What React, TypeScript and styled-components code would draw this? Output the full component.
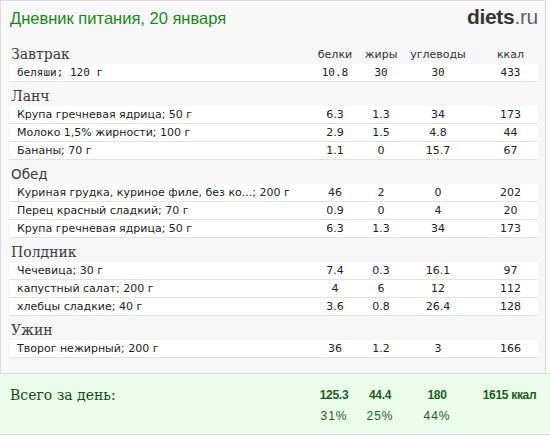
import React from 'react';
import styled, { createGlobalStyle } from 'styled-components';

const GlobalStyle = createGlobalStyle`
  html, body {
    margin: 0;
    padding: 0;
    background: #ffffff;
  }
  body {
    font-family: "DejaVu Sans", Verdana, sans-serif;
  }
`;

type Food = {
  name: string;
  protein: string;
  fat: string;
  carbs: string;
  kcal: string;
  mono?: boolean;
};

type Meal = {
  title: string;
  sans?: boolean;
  foods: Food[];
};

const meals: Meal[] = [
  {
    title: 'Завтрак',
    foods: [{ name: 'беляши; 120 г', protein: '10.8', fat: '30', carbs: '30', kcal: '433', mono: true }],
  },
  {
    title: 'Ланч',
    foods: [
      { name: 'Крупа гречневая ядрица; 50 г', protein: '6.3', fat: '1.3', carbs: '34', kcal: '173' },
      { name: 'Молоко 1,5% жирности; 100 г', protein: '2.9', fat: '1.5', carbs: '4.8', kcal: '44' },
      { name: 'Бананы; 70 г', protein: '1.1', fat: '0', carbs: '15.7', kcal: '67' },
    ],
  },
  {
    title: 'Обед',
    sans: true,
    foods: [
      { name: 'Куриная грудка, куриное филе, без ко...; 200 г', protein: '46', fat: '2', carbs: '0', kcal: '202' },
      { name: 'Перец красный сладкий; 70 г', protein: '0.9', fat: '0', carbs: '4', kcal: '20' },
      { name: 'Крупа гречневая ядрица; 50 г', protein: '6.3', fat: '1.3', carbs: '34', kcal: '173' },
    ],
  },
  {
    title: 'Полдник',
    foods: [
      { name: 'Чечевица; 30 г', protein: '7.4', fat: '0.3', carbs: '16.1', kcal: '97' },
      { name: 'капустный салат; 200 г', protein: '4', fat: '6', carbs: '12', kcal: '112' },
      { name: 'хлебцы сладкие; 40 г', protein: '3.6', fat: '0.8', carbs: '26.4', kcal: '128' },
    ],
  },
  {
    title: 'Ужин',
    foods: [{ name: 'Творог нежирный; 200 г', protein: '36', fat: '1.2', carbs: '3', kcal: '166' }],
  },
];

const App = () => {
  return (
    <>
      <GlobalStyle />
      <Page>
        <Panel>
          <Header>
            <Title>Дневник питания, 20 января</Title>
            <Logo>
              <b>diets</b>.ru
            </Logo>
          </Header>
          {meals.map((meal, i) => (
            <section key={meal.title}>
              <MealHead>
                <MealTitle $sans={meal.sans}>{meal.title}</MealTitle>
                {i === 0 && (
                  <>
                    <ColLabel>белки</ColLabel>
                    <ColLabel>жиры</ColLabel>
                    <ColLabel>углеводы</ColLabel>
                    <ColLabel $last>ккал</ColLabel>
                  </>
                )}
              </MealHead>
              {meal.foods.map((food, j) => (
                <FoodRow key={j} $mono={food.mono}>
                  <FoodName>{food.name}</FoodName>
                  <Num>{food.protein}</Num>
                  <Num>{food.fat}</Num>
                  <Num>{food.carbs}</Num>
                  <Num $last>{food.kcal}</Num>
                </FoodRow>
              ))}
            </section>
          ))}
        </Panel>
        <Totals>
          <TotalLabel>Всего за день:</TotalLabel>
          <TotalNum>125.3</TotalNum>
          <TotalNum>44.4</TotalNum>
          <TotalNum>180</TotalNum>
          <TotalNum $last>1615 ккал</TotalNum>
          <span />
          <Percent>31%</Percent>
          <Percent>25%</Percent>
          <Percent>44%</Percent>
          <span />
        </Totals>
      </Page>
    </>
  );
};

export default App;

const cols = '1fr 48px 44px 70px 65px';

const Page = styled.div`
  width: 550px;
  height: 436px;
  overflow: hidden;
`;

const Panel = styled.div`
  box-sizing: border-box;
  width: 546px;
  background: #f7f7f7;
  border: 1px solid #dedede;
  border-bottom: none;
  padding: 0 7px 15px 9px;
`;

const Header = styled.div`
  height: 39px;
  display: flex;
  justify-content: space-between;
  align-items: flex-start;
`;

const Title = styled.div`
  font-family: "Liberation Sans", Arial, sans-serif;
  font-size: 16.5px;
  line-height: 20px;
  padding-top: 7px;
  color: #178a17;
`;

const Logo = styled.div`
  font-family: "Liberation Sans", Arial, sans-serif;
  font-size: 21px;
  line-height: 24px;
  padding-top: 4px;
  color: #666666;
  letter-spacing: -0.3px;

  b {
    color: #363636;
  }
`;

const MealHead = styled.div`
  height: 24px;
  display: grid;
  grid-template-columns: ${cols};
  align-items: center;
  padding-top: 4px;
  box-sizing: border-box;
`;

const MealTitle = styled.div<{ $sans?: boolean }>`
  font-family: ${(p) => (p.$sans ? '"DejaVu Sans", Verdana, sans-serif' : '"DejaVu Serif", Georgia, serif')};
  font-size: ${(p) => (p.$sans ? '13.5px' : '14px')};
  color: #3c3c3c;
  line-height: 18px;
  padding-left: 1px;
`;

const ColLabel = styled.div<{ $last?: boolean }>`
  font-size: 11px;
  color: #333;
  text-align: center;
  padding-left: ${(p) => (p.$last ? '10px' : '0')};
`;

const FoodRow = styled.div<{ $mono?: boolean }>`
  display: grid;
  grid-template-columns: ${cols};
  align-items: center;
  height: 17px;
  background: #ffffff;
  border-bottom: 1px solid #e3e3e3;
  font-family: ${(p) => (p.$mono ? '"DejaVu Sans Mono", monospace' : '"DejaVu Sans", Verdana, sans-serif')};
  font-size: 11px;
  color: #222;
`;

const FoodName = styled.div`
  padding-left: 7px;
  white-space: nowrap;
  overflow: hidden;
`;

const Num = styled.div<{ $last?: boolean }>`
  text-align: center;
  padding-left: ${(p) => (p.$last ? '10px' : '0')};
`;

const Totals = styled.div`
  box-sizing: border-box;
  height: 62px;
  background: #eafcea;
  border-top: 1px solid #dadada;
  border-bottom: 1px solid #dadada;
  display: grid;
  grid-template-columns: ${cols};
  grid-template-rows: 22px 20px;
  align-items: center;
  padding: 10px 13px 0 10px;
  font-family: "Liberation Sans", Arial, sans-serif;
  color: #1d5f1d;
`;

const TotalLabel = styled.div`
  font-family: "DejaVu Serif", Georgia, serif;
  font-size: 14px;
  color: #0e4f0e;
`;

const TotalNum = styled.div<{ $last?: boolean }>`
  font-weight: bold;
  font-size: 12px;
  letter-spacing: -0.3px;
  text-align: center;
  padding-left: ${(p) => (p.$last ? '10px' : '0')};
`;

const Percent = styled.div`
  font-size: 12px;
  letter-spacing: 1px;
  text-align: center;
`;
